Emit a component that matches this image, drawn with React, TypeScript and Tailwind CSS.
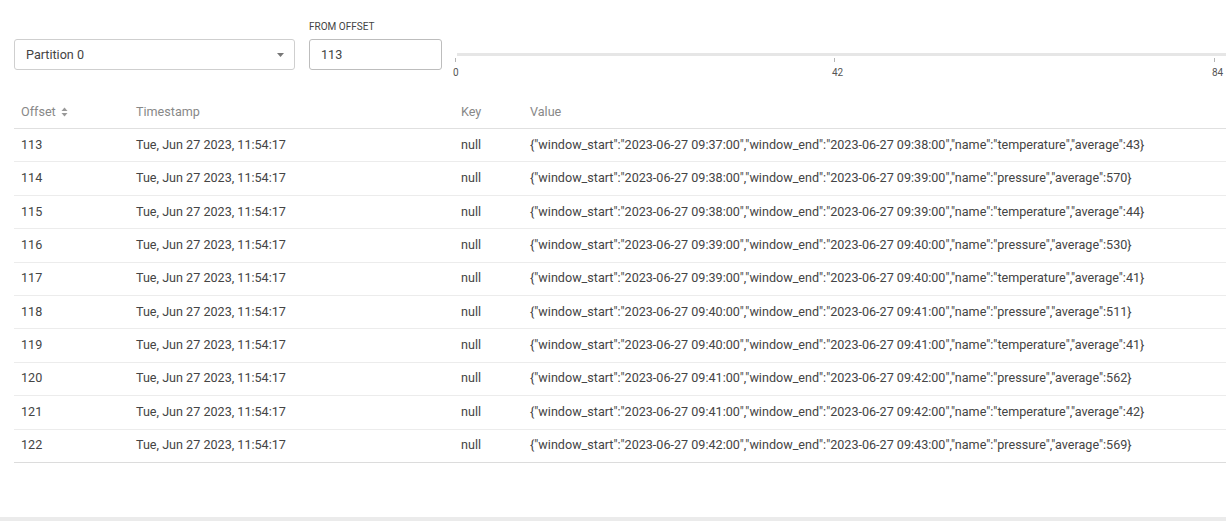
import React from 'react';

interface Row {
  offset: number;
  start: string;
  end: string;
  name: string;
  average: number;
}

const rows: Row[] = [
  { offset: 113, start: '09:37:00', end: '09:38:00', name: 'temperature', average: 43 },
  { offset: 114, start: '09:38:00', end: '09:39:00', name: 'pressure', average: 570 },
  { offset: 115, start: '09:38:00', end: '09:39:00', name: 'temperature', average: 44 },
  { offset: 116, start: '09:39:00', end: '09:40:00', name: 'pressure', average: 530 },
  { offset: 117, start: '09:39:00', end: '09:40:00', name: 'temperature', average: 41 },
  { offset: 118, start: '09:40:00', end: '09:41:00', name: 'pressure', average: 511 },
  { offset: 119, start: '09:40:00', end: '09:41:00', name: 'temperature', average: 41 },
  { offset: 120, start: '09:41:00', end: '09:42:00', name: 'pressure', average: 562 },
  { offset: 121, start: '09:41:00', end: '09:42:00', name: 'temperature', average: 42 },
  { offset: 122, start: '09:42:00', end: '09:43:00', name: 'pressure', average: 569 },
];

function SortIcon() {
  return (
    <svg width="7" height="10" viewBox="0 0 7 10" className="ml-[5px] inline-block">
      <path d="M3.5 0.5 L6.5 4 L0.5 4 Z" fill="#999" />
      <path d="M3.5 9.5 L6.5 6 L0.5 6 Z" fill="#999" />
    </svg>
  );
}

export default function App() {
  const ticks = [
    { label: '0', x: 0 },
    { label: '42', x: 379 },
    { label: '84', x: 759 },
  ];

  return (
    <div className="w-[1226px] h-[521px] overflow-hidden bg-white flex flex-col font-['Roboto',sans-serif] text-[12.6px] text-[#444]">
      <div className="flex-1 pl-[14px]">
        {/* controls */}
        <div className="flex items-start pt-[21px] h-[96px]">
          <div className="shrink-0 mt-[18px] w-[281px] h-[31px] border border-[#cfcfcf] rounded-[3px] flex items-center justify-between pl-[11px] pr-[10px] pt-px">
            <span>Partition 0</span>
            <svg width="7" height="4" viewBox="0 0 7 4">
              <path d="M0 0 L7 0 L3.5 4 Z" fill="#777" />
            </svg>
          </div>
          <div className="shrink-0 ml-[14px] flex flex-col">
            <span className="text-[10px] leading-[12px] text-[#444] uppercase h-[18px]">From Offset</span>
            <div className="w-[133px] h-[31px] border border-[#bdbdbd] rounded-[3px] flex items-center pl-[11px] pt-px">
              113
            </div>
          </div>
          <div className="shrink-0 ml-[13px] mt-[32px] w-[800px] relative h-[30px]">
            <div className="h-[3px] bg-[#e6e6e6] ml-[2px]" />
            {ticks.map((t) => (
              <div key={t.label} className="absolute top-[5px]" style={{ left: t.x }}>
                <div className="w-px h-[4px] bg-[#b5b5b5]" />
                <div className="text-[10px] leading-[12px] mt-[5px] -ml-[2px] text-[#555]">{t.label}</div>
              </div>
            ))}
          </div>
        </div>

        {/* table */}
        <div className="w-[1300px]">
          <div className="flex items-center h-[33px] border-b border-[#e0e0e0] text-[#888]">
            <div className="w-[115px] pl-[7px] flex items-center">
              Offset
              <SortIcon />
            </div>
            <div className="w-[325px] pl-[7px]">Timestamp</div>
            <div className="w-[69px] pl-[7px]">Key</div>
            <div className="flex-1 pl-[7px]">Value</div>
          </div>
          {rows.map((r, i) => (
            <div
              key={r.offset}
              className={
                i === rows.length - 1
                  ? 'flex items-center h-[33.4px] border-b border-[#dcdcdc]'
                  : 'flex items-center h-[33.4px] border-b border-[#ececec]'
              }
            >
              <div className="w-[115px] pl-[7px]">{r.offset}</div>
              <div className="w-[325px] pl-[7px]">Tue, Jun 27 2023, 11:54:17</div>
              <div className="w-[69px] pl-[7px]">null</div>
              <div className="flex-1 pl-[7px] whitespace-nowrap">
                {`{"window_start":"2023-06-27 ${r.start}","window_end":"2023-06-27 ${r.end}","name":"${r.name}","average":${r.average}}`}
              </div>
            </div>
          ))}
        </div>
      </div>
      <div className="h-[4px] bg-[#ebebeb]" />
    </div>
  );
}
